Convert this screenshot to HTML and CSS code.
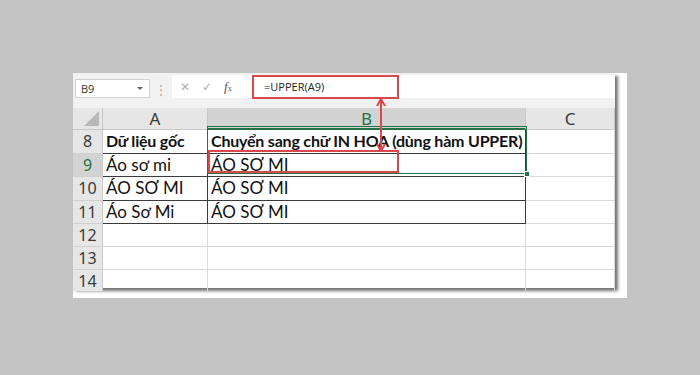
FILE: index.html
```html
<!DOCTYPE html>
<html lang="vi">
<head>
  <meta charset="UTF-8">
  <title>Hàm UPPER trong Excel</title>
  <link rel="stylesheet" href="styles.css">
</head>
<body>
  <div class="frame">
    <div class="sheet">
      <!-- Thanh công thức -->
      <div class="toolbar">
        <div class="namebox">
          <span>B9</span>
          <span class="caret"></span>
        </div>
        <div class="dots">⋮</div>
        <div class="formula">
          <div class="fbtns">
            <span class="fbtn">✕</span>
            <span class="fbtn">✓</span>
            <span class="fbtn fx"><i>f</i><small>x</small></span>
          </div>
          <div class="ftext">=UPPER(A9)</div>
        </div>
      </div>

      <!-- Bảng tính -->
      <div class="grid">
        <div class="corner"><span class="tri"></span></div>
        <div class="colhead">A</div>
        <div class="colhead sel">B</div>
        <div class="colhead">C</div>

        <div class="rowhead">8</div>
        <div class="cell b bold">Dữ liệu gốc</div>
        <div class="cell b bold">Chuyển sang chữ IN HOA (dùng hàm UPPER)</div>
        <div class="cell"></div>

        <div class="rowhead sel">9</div>
        <div class="cell b">Áo sơ mi</div>
        <div class="cell b">ÁO SƠ MI</div>
        <div class="cell"></div>

        <div class="rowhead">10</div>
        <div class="cell b">ÁO SƠ MI</div>
        <div class="cell b">ÁO SƠ MI</div>
        <div class="cell"></div>

        <div class="rowhead">11</div>
        <div class="cell b">Áo Sơ Mi</div>
        <div class="cell b">ÁO SƠ MI</div>
        <div class="cell"></div>

        <div class="rowhead">12</div>
        <div class="cell"></div>
        <div class="cell"></div>
        <div class="cell"></div>

        <div class="rowhead">13</div>
        <div class="cell"></div>
        <div class="cell"></div>
        <div class="cell"></div>

        <div class="rowhead last">14</div>
        <div class="cell last"></div>
        <div class="cell last"></div>
        <div class="cell last"></div>
      </div>

      <!-- Chú thích -->
      <div class="selection"><span class="handle"></span></div>
      <div class="mark mark-formula"></div>
      <div class="mark mark-cell"></div>
      <svg class="arrow" width="10" height="54" viewBox="0 0 10 54">
        <line x1="5" y1="2" x2="5" y2="52" stroke="#d9494b" stroke-width="2"/>
        <path d="M1 8 L5 1 L9 8" fill="none" stroke="#d9494b" stroke-width="2"/>
        <path d="M1 46 L5 53 L9 46" fill="none" stroke="#d9494b" stroke-width="2"/>
      </svg>
    </div>
  </div>
</body>
</html>
```

FILE: styles.css
```css
* {
  box-sizing: border-box;
}

body {
  margin: 0;
  width: 700px;
  height: 375px;
  background-color: #c3c3c3;
  padding: 73px 0 0 73px;
  font-family: 'Open Sans', 'Noto Sans', sans-serif;
}

.frame {
  width: 554px;
  height: 225px;
  background: #ffffff;
}

.sheet {
  position: relative;
  width: 542px;
  height: 215px;
  background: #ffffff;
  box-shadow: 3px 3px 3px rgba(0, 0, 0, 0.55);
}

/* thanh công thức */
.toolbar {
  height: 32px;
  background: #f1f1f1;
  display: flex;
  align-items: flex-start;
  padding-top: 2px;
}

.namebox {
  margin: 4px 0 0 2px;
  width: 75px;
  height: 19px;
  background: #fff;
  border: 1px solid #d2d2d2;
  display: flex;
  align-items: center;
  justify-content: space-between;
  padding: 0 6px 0 5px;
  font-size: 11px;
  color: #333;
}

.caret {
  width: 0;
  height: 0;
  border-left: 3px solid transparent;
  border-right: 3px solid transparent;
  border-top: 3px solid #666;
}

.dots {
  width: 22px;
  text-align: center;
  color: #a8a8a8;
  font-size: 12px;
  margin-top: 6px;
}

.formula {
  flex: 1;
  height: 23px;
  background: #fff;
  display: flex;
  align-items: center;
}

.fbtns {
  width: 80px;
  display: flex;
  align-items: center;
  padding-left: 8px;
  gap: 12px;
  color: #b0b0b0;
  font-size: 12px;
}

.fbtn.fx {
  color: #555;
  font-family: 'Liberation Serif', serif;
  font-size: 13px;
}

.fbtn.fx small {
  font-size: 8px;
}

.ftext {
  padding-left: 12px;
  font-size: 11px;
  color: #222;
}

/* bảng */
.grid {
  display: grid;
  grid-template-columns: 30px 105px 318px 89px;
  grid-template-rows: 22px 24px 23px 24px 23px 23px 23px 21px;
  border-top: 3px solid #f1f1f1;
}

.corner {
  background: #e6e6e6;
  border-right: 1px solid #c8c8c8;
  border-bottom: 1px solid #c8c8c8;
  position: relative;
}

.tri {
  position: absolute;
  right: 3px;
  bottom: 3px;
  width: 0;
  height: 0;
  border-left: 15px solid transparent;
  border-bottom: 15px solid #b8b8b8;
}

.colhead {
  background: #e6e6e6;
  border-right: 1px solid #c8c8c8;
  border-bottom: 1px solid #c8c8c8;
  text-align: center;
  font-family: 'Noto Sans', sans-serif;
  font-size: 17px;
  line-height: 22px;
  color: #3a3a3a;
}

.colhead.sel {
  background: #d3d3d3;
  color: #217346;
  border-bottom: 2px solid #217346;
}

.rowhead {
  background: #e6e6e6;
  border-right: 1px solid #c8c8c8;
  border-bottom: 1px solid #d0d0d0;
  text-align: center;
  font-family: 'Noto Sans', sans-serif;
  font-size: 16px;
  line-height: 22px;
  color: #3a3a3a;
}

.rowhead.sel {
  background: #d3d3d3;
  color: #217346;
}

.cell {
  border-right: 1px solid #dadada;
  border-bottom: 1px solid #dadada;
  font-family: 'Lato', sans-serif;
  font-size: 17px;
  line-height: 22px;
  color: #111;
  padding-left: 3px;
  white-space: nowrap;
}

.cell.b {
  border-right: 1px solid #3a3a3a;
  border-bottom: 1px solid #3a3a3a;
}

.bold {
  font-weight: 700;
  font-size: 16px;
  letter-spacing: -0.2px;
}

.last {
  border-bottom: none;
}

/* vùng chọn và chú thích */
.selection {
  position: absolute;
  left: 134px;
  top: 53px;
  width: 320px;
  height: 48px;
  border: 1px solid #217346;
}

.handle {
  position: absolute;
  right: -4px;
  bottom: -4px;
  width: 6px;
  height: 6px;
  background: #217346;
  border: 1px solid #fff;
}

.mark {
  position: absolute;
  border: 2px solid #d9494b;
}

.mark-formula {
  left: 179px;
  top: 2px;
  width: 147px;
  height: 24px;
}

.mark-cell {
  left: 135px;
  top: 77px;
  width: 191px;
  height: 23px;
}

.arrow {
  position: absolute;
  left: 303px;
  top: 25px;
}
```
